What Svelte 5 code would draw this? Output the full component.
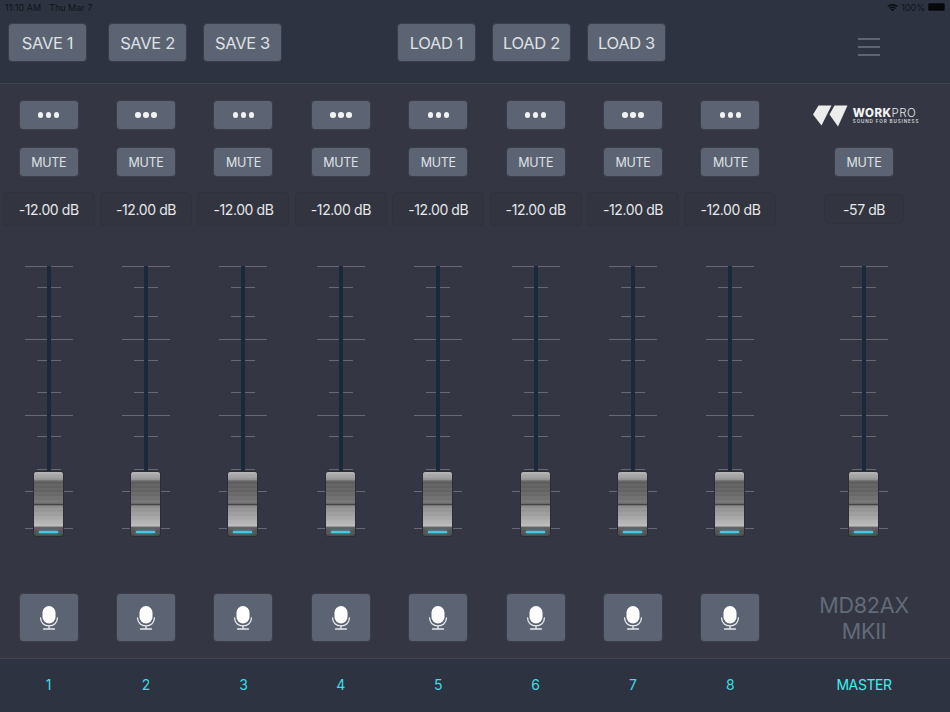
<script>
  const channels = ["1", "2", "3", "4", "5", "6", "7", "8"];
  const saves = ["SAVE 1", "SAVE 2", "SAVE 3"];
  const loads = ["LOAD 1", "LOAD 2", "LOAD 3"];
  // y position of each scale mark inside the fader box
  const ticks = [
    { y: 8, long: true },
    { y: 29 },
    { y: 58 },
    { y: 81, long: true },
    { y: 102 },
    { y: 134 },
    { y: 157, long: true },
    { y: 178 },
    { y: 211 },
    { y: 233, long: true },
    { y: 270, long: true }
  ];
</script>

{#snippet fader()}
  <div class="fader">
    {#each ticks as tick}
      <span class="tick" class:long={tick.long} style="top: {tick.y}px"></span>
    {/each}
    <span class="track"></span>
    <span class="cap"><span class="led"></span></span>
  </div>
{/snippet}

<div class="mixer">
  <header>
    <div class="status">
      <span class="time">11:10 AM</span>
      <span class="date">Thu Mar 7</span>
      <span class="status-right">
        <svg width="11" height="9" viewBox="0 0 11 9">
          <path d="M0.3 3.1a7.4 7.4 0 0 1 10.4 0l-1 1a6 6 0 0 0-8.4 0z" fill="#0a0c12" />
          <path d="M2 4.9a5 5 0 0 1 7 0l-1 1a3.6 3.6 0 0 0-5 0z" fill="#0a0c12" />
          <path d="M3.7 6.6a2.6 2.6 0 0 1 3.6 0L5.5 8.4z" fill="#0a0c12" />
        </svg>
        <span>100%</span>
        <span class="battery"></span>
      </span>
    </div>
    <div class="presets">
      <div class="group saves">
        {#each saves as label}
          <button type="button" class="preset">{label}</button>
        {/each}
      </div>
      <div class="group loads">
        {#each loads as label}
          <button type="button" class="preset">{label}</button>
        {/each}
      </div>
      <button type="button" class="menu" aria-label="Menu">
        <span></span><span></span><span></span>
      </button>
    </div>
  </header>

  <main class="strips">
    {#each channels as ch}
      <section class="strip">
        <button type="button" class="small dots" aria-label="More">
          <i></i><i></i><i></i>
        </button>
        <button type="button" class="small mute">MUTE</button>
        <div class="level">-12.00 dB</div>
        {@render fader()}
        <button type="button" class="mic" aria-label="Microphone {ch}">
          <svg width="20" height="24" viewBox="0 0 20 24" fill="none">
            <rect x="3.5" y="0" width="13" height="17.5" rx="6.5" fill="#fff" />
            <path d="M1.6 12c0 4.8 3.6 7.8 8.4 7.8s8.4-3 8.4-7.8" stroke="#e8eaee" stroke-width="1.3" stroke-linecap="round" />
            <path d="M10 20v2.6M4.5 23h11" stroke="#e8eaee" stroke-width="1.3" stroke-linecap="round" />
          </svg>
        </button>
      </section>
    {/each}

    <section class="strip master">
      <div class="logo">
        <svg width="35" height="22" viewBox="0 0 35 22">
          <polygon points="5.5,0.5 18.5,0.5 8.5,20.5 0,9.5" fill="#ececec" />
          <polygon points="21.5,0.5 34.5,0.5 25,21.5 16.5,9.5" fill="#ececec" />
        </svg>
        <div class="logo-text">
          <div class="brand"><b>WORK</b>PRO</div>
          <div class="tagline">SOUND FOR BUSINESS</div>
        </div>
      </div>
      <button type="button" class="small mute">MUTE</button>
      <div class="level master-level">-57 dB</div>
      {@render fader()}
      <div class="model">MD82AX<br />MKII</div>
    </section>
  </main>

  <footer>
    {#each channels as ch}
      <span class="label">{ch}</span>
    {/each}
    <span class="label master-label">MASTER</span>
  </footer>
</div>

<style>
  :global(body) {
    margin: 0;
    background: #343643;
  }

  .mixer {
    width: 950px;
    height: 712px;
    display: flex;
    flex-direction: column;
    overflow: hidden;
    background: #343643;
    font-family: Inter, "Liberation Sans", sans-serif;
  }

  header {
    height: 84px;
    flex: none;
    box-sizing: border-box;
    background: #2e3341;
    border-bottom: 1px solid #41444f;
  }

  .status {
    height: 14px;
    display: flex;
    align-items: center;
    padding: 0 5px;
    font-size: 9px;
    color: #10131a;
  }

  .date {
    margin-left: 8px;
  }

  .status-right {
    margin-left: auto;
    display: flex;
    align-items: center;
    gap: 3px;
  }

  .battery {
    width: 15px;
    height: 6px;
    background: #05070b;
    border-radius: 1.5px;
    border: 0.5px solid #10131a;
  }

  .presets {
    display: flex;
    padding: 9px 0 0 8px;
  }

  .group {
    display: flex;
    gap: 16px;
  }

  .saves button:first-child {
    margin-right: 5px;
  }

  .loads {
    margin-left: 115px;
  }

  button {
    font-family: inherit;
    padding: 0;
    cursor: pointer;
  }

  .preset,
  .small,
  .mic {
    background: #5c6473;
    color: #dfe1e5;
    border: 1px solid #3b3e4a;
    border-radius: 4px;
    box-sizing: border-box;
  }

  .preset {
    width: 79px;
    height: 39px;
    font-size: 16.5px;
    letter-spacing: -0.35px;
  }

  .menu {
    width: 22px;
    height: 18px;
    margin: 15px 0 0 192px;
    background: none;
    border: none;
    display: flex;
    flex-direction: column;
    justify-content: space-between;
  }

  .menu span {
    display: block;
    width: 22px;
    height: 2px;
    background: #5f6470;
  }

  .strips {
    flex: 1;
    display: grid;
    grid-template-columns: repeat(8, 97.4px) 1fr;
  }

  .strip {
    display: flex;
    flex-direction: column;
    align-items: center;
    padding-top: 16px;
  }

  .master {
    padding-right: 1px;
  }

  .small {
    width: 60px;
    height: 30px;
    flex: none;
  }

  .dots {
    display: flex;
    align-items: center;
    justify-content: center;
    gap: 2.5px;
  }

  .dots i {
    width: 5.5px;
    height: 5.5px;
    border-radius: 50%;
    background: #f0f1f3;
  }

  .mute {
    margin-top: 17px;
    font-size: 12.5px;
    letter-spacing: -0.3px;
  }

  .level {
    width: 92px;
    height: 34px;
    margin-top: 15px;
    box-sizing: border-box;
    display: flex;
    align-items: center;
    justify-content: center;
    background: #32343f;
    border: 1px solid #2f313c;
    border-radius: 4px;
    color: #e6e8ea;
    font-size: 14px;
    letter-spacing: -0.4px;
    flex: none;
  }

  .master-level {
    width: 80px;
    height: 30px;
    margin-top: 17px;
    margin-bottom: 2px;
  }

  .fader {
    position: relative;
    width: 100%;
    height: 290px;
    margin-top: 32px;
    flex: none;
  }

  .tick {
    position: absolute;
    left: 50%;
    width: 24px;
    height: 1px;
    margin-left: -12px;
    background: #666974;
  }

  .tick.long {
    width: 48px;
    margin-left: -24px;
  }

  .track {
    position: absolute;
    left: 50%;
    top: 8px;
    width: 4px;
    height: 208px;
    margin-left: -2px;
    background: #1b2a3a;
  }

  .cap {
    position: absolute;
    left: 50%;
    top: 213px;
    width: 31px;
    height: 66px;
    margin-left: -16px;
    box-sizing: border-box;
    border: 1px solid #2c2d33;
    border-radius: 3px;
    background:
      repeating-linear-gradient(to bottom, rgb(255 255 255 / 0.04) 0 2px, transparent 2px 4px),
      linear-gradient(
        to bottom,
        #b5b5b5 0,
        #939393 12%,
        #5e5e5e 14%,
        #636363 30%,
        #777 49%,
        #3c3c3e 50%,
        #3c3c3e 51%,
        #8c8c8c 53%,
        #a0a0a0 68%,
        #bcbcbc 84%,
        #595959 87%,
        #4b4b4b 100%
      );
  }

  .led {
    position: absolute;
    left: 5px;
    right: 5px;
    bottom: 3px;
    height: 2.5px;
    background: #43c8e6;
    box-shadow: 0 0 3px #43c8e6;
  }

  .mic {
    width: 60px;
    height: 49px;
    margin-top: 45px;
    flex: none;
    display: flex;
    align-items: center;
    justify-content: center;
  }

  .logo {
    height: 30px;
    padding-top: 2px;
    box-sizing: border-box;
    display: flex;
    align-items: center;
    gap: 5px;
    margin-left: 4px;
    flex: none;
  }

  .brand {
    font-size: 11.5px;
    line-height: 12px;
    color: #e6e7ea;
    letter-spacing: 0.5px;
    font-weight: 300;
  }

  .brand b {
    font-weight: 800;
    color: #f3f3f3;
  }

  .tagline {
    font-size: 4.6px;
    line-height: 6px;
    font-weight: 600;
    letter-spacing: 0.85px;
    color: #d5d6da;
    white-space: nowrap;
  }

  .model {
    margin-top: 44px;
    color: #626b78;
    font-size: 21.5px;
    line-height: 26px;
    letter-spacing: -0.2px;
    text-align: center;
  }

  footer {
    height: 54px;
    flex: none;
    display: grid;
    grid-template-columns: repeat(8, 97.4px) 1fr;
    align-items: center;
    box-sizing: border-box;
    padding-bottom: 2px;
    padding-right: 1px;
    background: #2e3341;
    border-top: 1px solid #41444f;
  }

  .label {
    text-align: center;
    font-size: 14px;
    color: #3cdde6;
  }

  .master-label {
    color: #3ff0ee;
    letter-spacing: -0.4px;
  }
</style>
